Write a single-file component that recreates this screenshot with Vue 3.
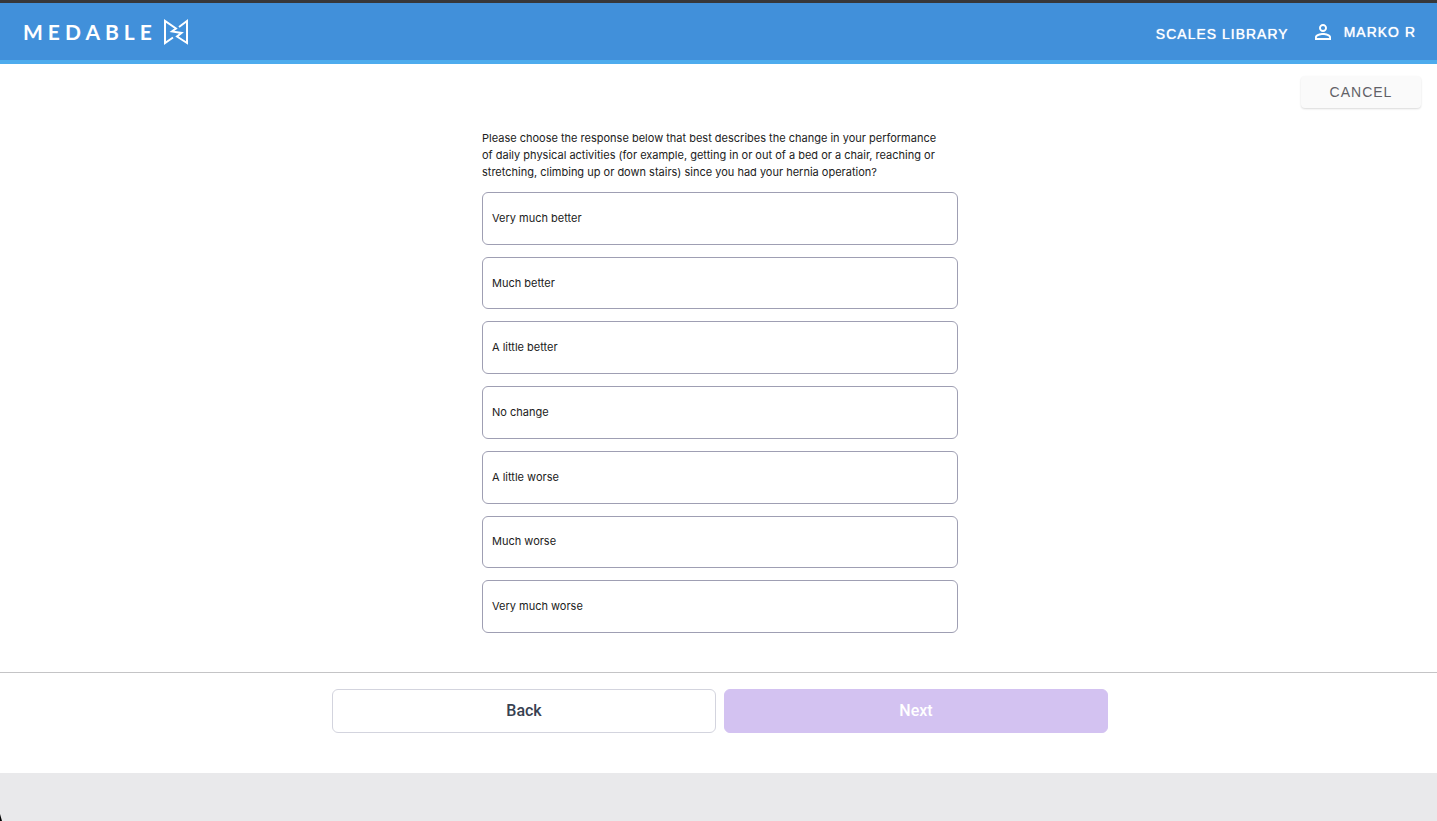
<script setup>
import { ref } from 'vue'

const options = [
  'Very much better',
  'Much better',
  'A little better',
  'No change',
  'A little worse',
  'Much worse',
  'Very much worse',
]
const answer = ref('')
</script>

<template>
  <div class="page">
    <header class="topbar">
      <a class="brand" href="#" aria-label="Medable">
        <span class="wordmark">MEDABLE</span>
        <svg class="mark" viewBox="0 0 26 26" width="26" height="26" aria-hidden="true">
          <path d="M10 18.500 L2 24 V2 L13 9.500 L9 12.500 L18.500 14 L14 17.500 L24 24 V2 L16 8" />
        </svg>
      </a>
      <nav class="nav">
        <a class="nav-link library" href="#">SCALES LIBRARY</a>
        <a class="nav-link user" href="#">
          <svg viewBox="4 4 16 16" width="16" height="16" aria-hidden="true">
            <path d="M12 5.9a2.1 2.1 0 1 1 0 4.2 2.1 2.1 0 0 1 0-4.2m0 9c2.970 0 6.100 1.460 6.100 2.100v1.100H5.900V17c0-.640 3.130-2.100 6.100-2.100M12 4C9.790 4 8 5.790 8 8s1.790 4 4 4 4-1.790 4-4-1.790-4-4-4m0 9c-2.670 0-8 1.340-8 4v3h16v-3c0-2.660-5.330-4-8-4" />
          </svg>
          <span>MARKO R</span>
        </a>
      </nav>
    </header>

    <div class="toolbar">
      <button class="cancel" type="button">CANCEL</button>
    </div>

    <main class="question">
      <p id="prompt" class="prompt">
        Please choose the response below that best describes the change in your performance of daily
        physical activities (for example, getting in or out of a bed or a chair, reaching or
        stretching, climbing up or down stairs) since you had your hernia operation?
      </p>
      <div class="options" role="radiogroup" aria-labelledby="prompt">
        <label v-for="option in options" :key="option" class="option">
          <input v-model="answer" class="radio" type="radio" name="answer" :value="option" />
          <span>{{ option }}</span>
        </label>
      </div>
    </main>

    <div class="actions">
      <button class="action back" type="button">Back</button>
      <button class="action next" type="button" :disabled="!answer">Next</button>
    </div>

    <footer class="base"></footer>
  </div>
</template>

<style>
body {
  background: #fff;
}
</style>

<style scoped>
* {
  box-sizing: border-box;
}
.page {
  min-height: 100vh;
  display: flex;
  flex-direction: column;
  font-family: Inter, 'Liberation Sans', sans-serif;
  color: #212121;
}
.topbar {
  height: 64px;
  display: flex;
  align-items: center;
  justify-content: space-between;
  padding: 0 21px 0 23px;
  background: #4190da;
  border-top: 3px solid #373739;
  border-bottom: 4px solid #4dabed;
}
a {
  color: #fff;
  text-decoration: none;
}
.brand {
  display: flex;
  align-items: center;
  gap: 6px;
}
.wordmark {
  font: 700 21px/24px Lato, sans-serif;
  letter-spacing: 5px;
}
.mark {
  fill: none;
  stroke: #fff;
  stroke-width: 2;
}
.nav {
  display: flex;
  align-items: center;
  gap: 26px;
}
.nav-link {
  font: 400 14px/20px 'Liberation Sans', sans-serif;
  letter-spacing: 1px;
  text-shadow: 0 0 1px #fff;
}
.library {
  padding-top: 4px;
}
.user {
  display: flex;
  align-items: center;
  gap: 13px;
}
.user svg {
  fill: #fff;
}
.toolbar {
  display: flex;
  justify-content: flex-end;
  padding: 12px 16px 0;
}
.cancel {
  width: 120px;
  height: 32px;
  border: 0;
  border-radius: 4px;
  background: #fafafa;
  box-shadow: 0 1px 2px rgba(0, 0, 0, 0.15);
  color: #616167;
  font: 400 14px/20px 'Liberation Sans', sans-serif;
  letter-spacing: 1px;
}
.question {
  flex: 1;
  display: flex;
  flex-direction: column;
  width: 100%;
  max-width: 479px;
  margin: 0 auto;
  padding: 22px 0 39px 3px;
}
.prompt {
  margin: 0 0 11px;
  padding-right: 14px;
  font-size: 11px;
  line-height: 17px;
}
.options {
  flex: 1;
  display: grid;
  grid-auto-rows: 1fr;
  gap: 12px;
}
.option {
  position: relative;
  display: flex;
  align-items: center;
  min-height: 48px;
  padding: 0 9px;
  border: 1px solid #9f9fb3;
  border-radius: 6px;
  font-size: 11px;
  line-height: 17px;
  cursor: pointer;
}
.option:has(:checked) {
  border-color: #8a5cd6;
}
.radio {
  position: absolute;
  inset: 0;
  margin: 0;
  opacity: 0;
}
.actions {
  display: flex;
  justify-content: center;
  gap: 8px;
  padding: 16px 16px 40px 19px;
  border-top: 1px solid #c4c4c6;
}
.action {
  flex: 0 1 384px;
  height: 44px;
  border: 1px solid #d3d4de;
  border-radius: 6px;
  font: 500 16px/24px Roboto, sans-serif;
}
.back {
  background: #fff;
  color: #374151;
}
.next {
  border-color: #d3c2f1;
  background: #d3c2f1;
  color: #fff;
}
.base {
  position: relative;
  height: 48px;
  background: #e9e9eb;
}
.base::before {
  content: '';
  position: absolute;
  left: 0;
  bottom: 0;
  width: 2px;
  height: 7px;
  background: #000;
  clip-path: polygon(0 0, 100% 100%, 0 100%);
}
</style>
